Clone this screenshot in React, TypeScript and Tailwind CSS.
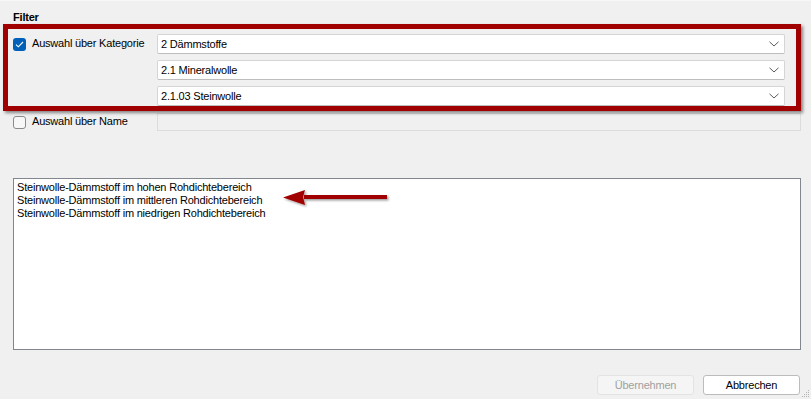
import React from "react";

const Chevron = () => (
  <svg width="10" height="6" viewBox="0 0 10 6" className="shrink-0">
    <path d="M0.5 0.8 L5 5 L9.5 0.8" fill="none" stroke="#5a5a5a" strokeWidth="1" />
  </svg>
);

const Dropdown = ({ text }: { text: string }) => (
  <div className="w-[628px] h-[20px] bg-white border border-[#d5d5d5] border-b-[#bdbdbd] rounded-[2px] flex items-center justify-between pl-[3px] pr-[5px] text-black">
    <span className="whitespace-nowrap">{text}</span>
    <Chevron />
  </div>
);

export default function App() {
  return (
    <div
      className="w-[811px] h-[399px] bg-[#f0f0f0] relative overflow-hidden text-[11px] tracking-[-0.2px] leading-[15px] text-black"
      style={{ fontFamily: '"Liberation Sans", Arial, sans-serif' }}
    >
      <div className="h-[1px] bg-[#f7f7f7]" />
      <div className="pt-[9px] pl-[13px] flex flex-col">
        <div className="font-bold">Filter</div>
        <div className="mt-[9px] flex items-center h-[20px]">
          <div className="w-[144px] flex items-center">
            <div className="w-[13px] h-[13px] shrink-0 rounded-[3px] bg-[#005fb8] flex items-center justify-center">
              <svg width="9" height="7" viewBox="0 0 9 7">
                <path d="M1 3.6 L3.3 5.8 L8 1" fill="none" stroke="white" strokeWidth="1.1" />
              </svg>
            </div>
            <span className="ml-[6px] -mt-[1px] whitespace-nowrap">Auswahl über Kategorie</span>
          </div>
          <Dropdown text="2 Dämmstoffe" />
        </div>
        <div className="mt-[6px] ml-[144px]">
          <Dropdown text="2.1 Mineralwolle" />
        </div>
        <div className="mt-[6px] ml-[144px]">
          <Dropdown text="2.1.03 Steinwolle" />
        </div>
        <div className="mt-[7px] flex items-center h-[18px]">
          <div className="w-[144px] flex items-center">
            <div className="w-[13px] h-[13px] shrink-0 rounded-[3px] border border-[#8a8a8a] bg-[#f7f7f7]" />
            <span className="ml-[6px] -mt-[1px] whitespace-nowrap">Auswahl über Name</span>
          </div>
          <div className="w-[644px] h-[18px] border border-[#dcdcdc] bg-[#f0f0f0]" />
        </div>
        <div className="mt-[47px] w-[788px] h-[172px] bg-white border border-[#82878f] pl-[3px] pt-[2px] leading-[13px] whitespace-nowrap">
          <div>Steinwolle-Dämmstoff im hohen Rohdichtebereich</div>
          <div>Steinwolle-Dämmstoff im mittleren Rohdichtebereich</div>
          <div>Steinwolle-Dämmstoff im niedrigen Rohdichtebereich</div>
        </div>
        <div className="mt-[25px] flex justify-end pr-[11px] gap-[9px]">
          <div className="w-[97px] h-[20px] rounded-[3px] border border-[#e3e3e3] bg-[#f5f5f5] text-[#a0a0a0] flex items-center justify-center">
            Übernehmen
          </div>
          <div className="w-[97px] h-[20px] rounded-[3px] border border-[#bcbcbc] bg-white flex items-center justify-center">
            Abbrechen
          </div>
        </div>
      </div>

      {/* annotation overlay: red frame */}
      <div className="absolute left-[3px] top-[24px] w-[798px] h-[87px] border-[5px] border-[#a00000] shadow-[2px_2px_3px_rgba(0,0,0,0.45)] pointer-events-none" />

      {/* annotation overlay: arrow */}
      <svg className="absolute left-[280px] top-[187px]" width="112" height="22" viewBox="0 0 112 22">
        <defs>
          <filter id="sh" x="-10%" y="-50%" width="130%" height="200%">
            <feDropShadow dx="1.5" dy="1.5" stdDeviation="1" floodColor="#000" floodOpacity="0.4" />
          </filter>
        </defs>
        <g filter="url(#sh)">
          <rect x="24" y="8" width="83" height="4" fill="#a00000" />
          <path d="M3 10.5 L25 3 L23 10 L25 18 Z" fill="#a00000" />
        </g>
      </svg>

      {/* resize grip */}
      <svg className="absolute right-[1px] bottom-[1px]" width="8" height="8" viewBox="0 0 8 8">
        <rect x="6" y="0" width="1" height="1" fill="#b5b5b5" />
        <rect x="4" y="2" width="1" height="1" fill="#b5b5b5" />
        <rect x="6" y="2" width="1" height="1" fill="#b5b5b5" />
        <rect x="2" y="4" width="1" height="1" fill="#b5b5b5" />
        <rect x="4" y="4" width="1" height="1" fill="#b5b5b5" />
        <rect x="6" y="4" width="1" height="1" fill="#b5b5b5" />
        <rect x="0" y="6" width="1" height="1" fill="#b5b5b5" />
        <rect x="2" y="6" width="1" height="1" fill="#b5b5b5" />
        <rect x="4" y="6" width="1" height="1" fill="#b5b5b5" />
        <rect x="6" y="6" width="1" height="1" fill="#b5b5b5" />
      </svg>
    </div>
  );
}
